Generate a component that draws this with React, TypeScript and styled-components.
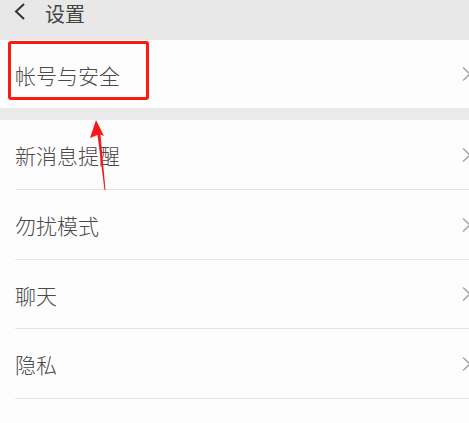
import React from "react";
import styled, { createGlobalStyle } from "styled-components";

const Global = createGlobalStyle`
  html, body { margin: 0; padding: 0; }
  body {
    width: 469px;
    height: 423px;
    overflow: hidden;
    background: #fefdfe;
    font-family: "Noto Sans CJK SC", "Noto Sans", sans-serif;
  }
`;

const Page = styled.div`
  position: relative;
  width: 469px;
  height: 423px;
  overflow: hidden;
  background: #fefdfe;
`;

const Header = styled.div`
  height: 40px;
  background: #e9e8e8;
  display: flex;
  align-items: flex-start;
  gap: 19px;
  padding: 3px 0 0 14px;
  box-sizing: border-box;
`;

const Title = styled.div`
  font-size: 20px;
  line-height: 17px;
  color: #444;
  padding-top: 2px;
`;

const Group = styled.div`
  background: #fefdfe;
`;

const Gap = styled.div`
  height: 12px;
  background: #ebeaea;
`;

const Row = styled.div<{ $h: number; $last?: boolean }>`
  height: ${(p) => p.$h}px;
  display: flex;
  align-items: center;
  justify-content: space-between;
  margin-left: 15px;
  border-bottom: ${(p) => (p.$last ? "none" : "1px solid #e6e5e5")};
  box-sizing: border-box;
  overflow: hidden;
`;

const Label = styled.span`
  font-size: 21px;
  font-weight: 300;
  color: #4a4a4a;
  line-height: 1;
  padding-top: 2px;
`;

const Chevron = styled.svg`
  flex: none;
  margin-left: auto;
  margin-right: -3px;
`;

const Highlight = styled.div`
  position: absolute;
  left: 8px;
  top: 41px;
  width: 141px;
  height: 59px;
  border: 3px solid #fb1b13;
  border-radius: 3px;
  box-sizing: border-box;
`;

const Arrow = styled.svg`
  position: absolute;
  left: 86px;
  top: 118px;
`;

const ChevronRight = () => (
  <Chevron width="10" height="16" viewBox="0 0 10 16">
    <path d="M1 1.5 L8 8 L1 14.5" fill="none" stroke="#a8a8a8" strokeWidth="1.6" />
  </Chevron>
);

const items = [
  { label: "新消息提醒", h: 70 },
  { label: "勿扰模式", h: 70 },
  { label: "聊天", h: 69 },
  { label: "隐私", h: 70 },
];

export default function App() {
  return (
    <>
      <Global />
      <Page>
        <Header>
          <svg width="12" height="17" viewBox="0 0 12 17">
            <path d="M10 1 L2 8.5 L10 16" fill="none" stroke="#333" strokeWidth="2" />
          </svg>
          <Title>设置</Title>
        </Header>
        <Group>
          <Row $h={68} $last>
            <Label>帐号与安全</Label>
            <ChevronRight />
          </Row>
        </Group>
        <Gap />
        <Group>
          {items.map((it) => (
            <Row key={it.label} $h={it.h}>
              <Label>{it.label}</Label>
              <ChevronRight />
            </Row>
          ))}
          <Row $h={70} $last />
        </Group>
        <Highlight />
        <Arrow width="24" height="76" viewBox="0 0 24 76">
          <path d="M10 2 L18 18 L14.5 16.5 L19.5 72 L18.5 72 L11.5 17 L4 20 Z" fill="#f5191a" />
        </Arrow>
      </Page>
    </>
  );
}
